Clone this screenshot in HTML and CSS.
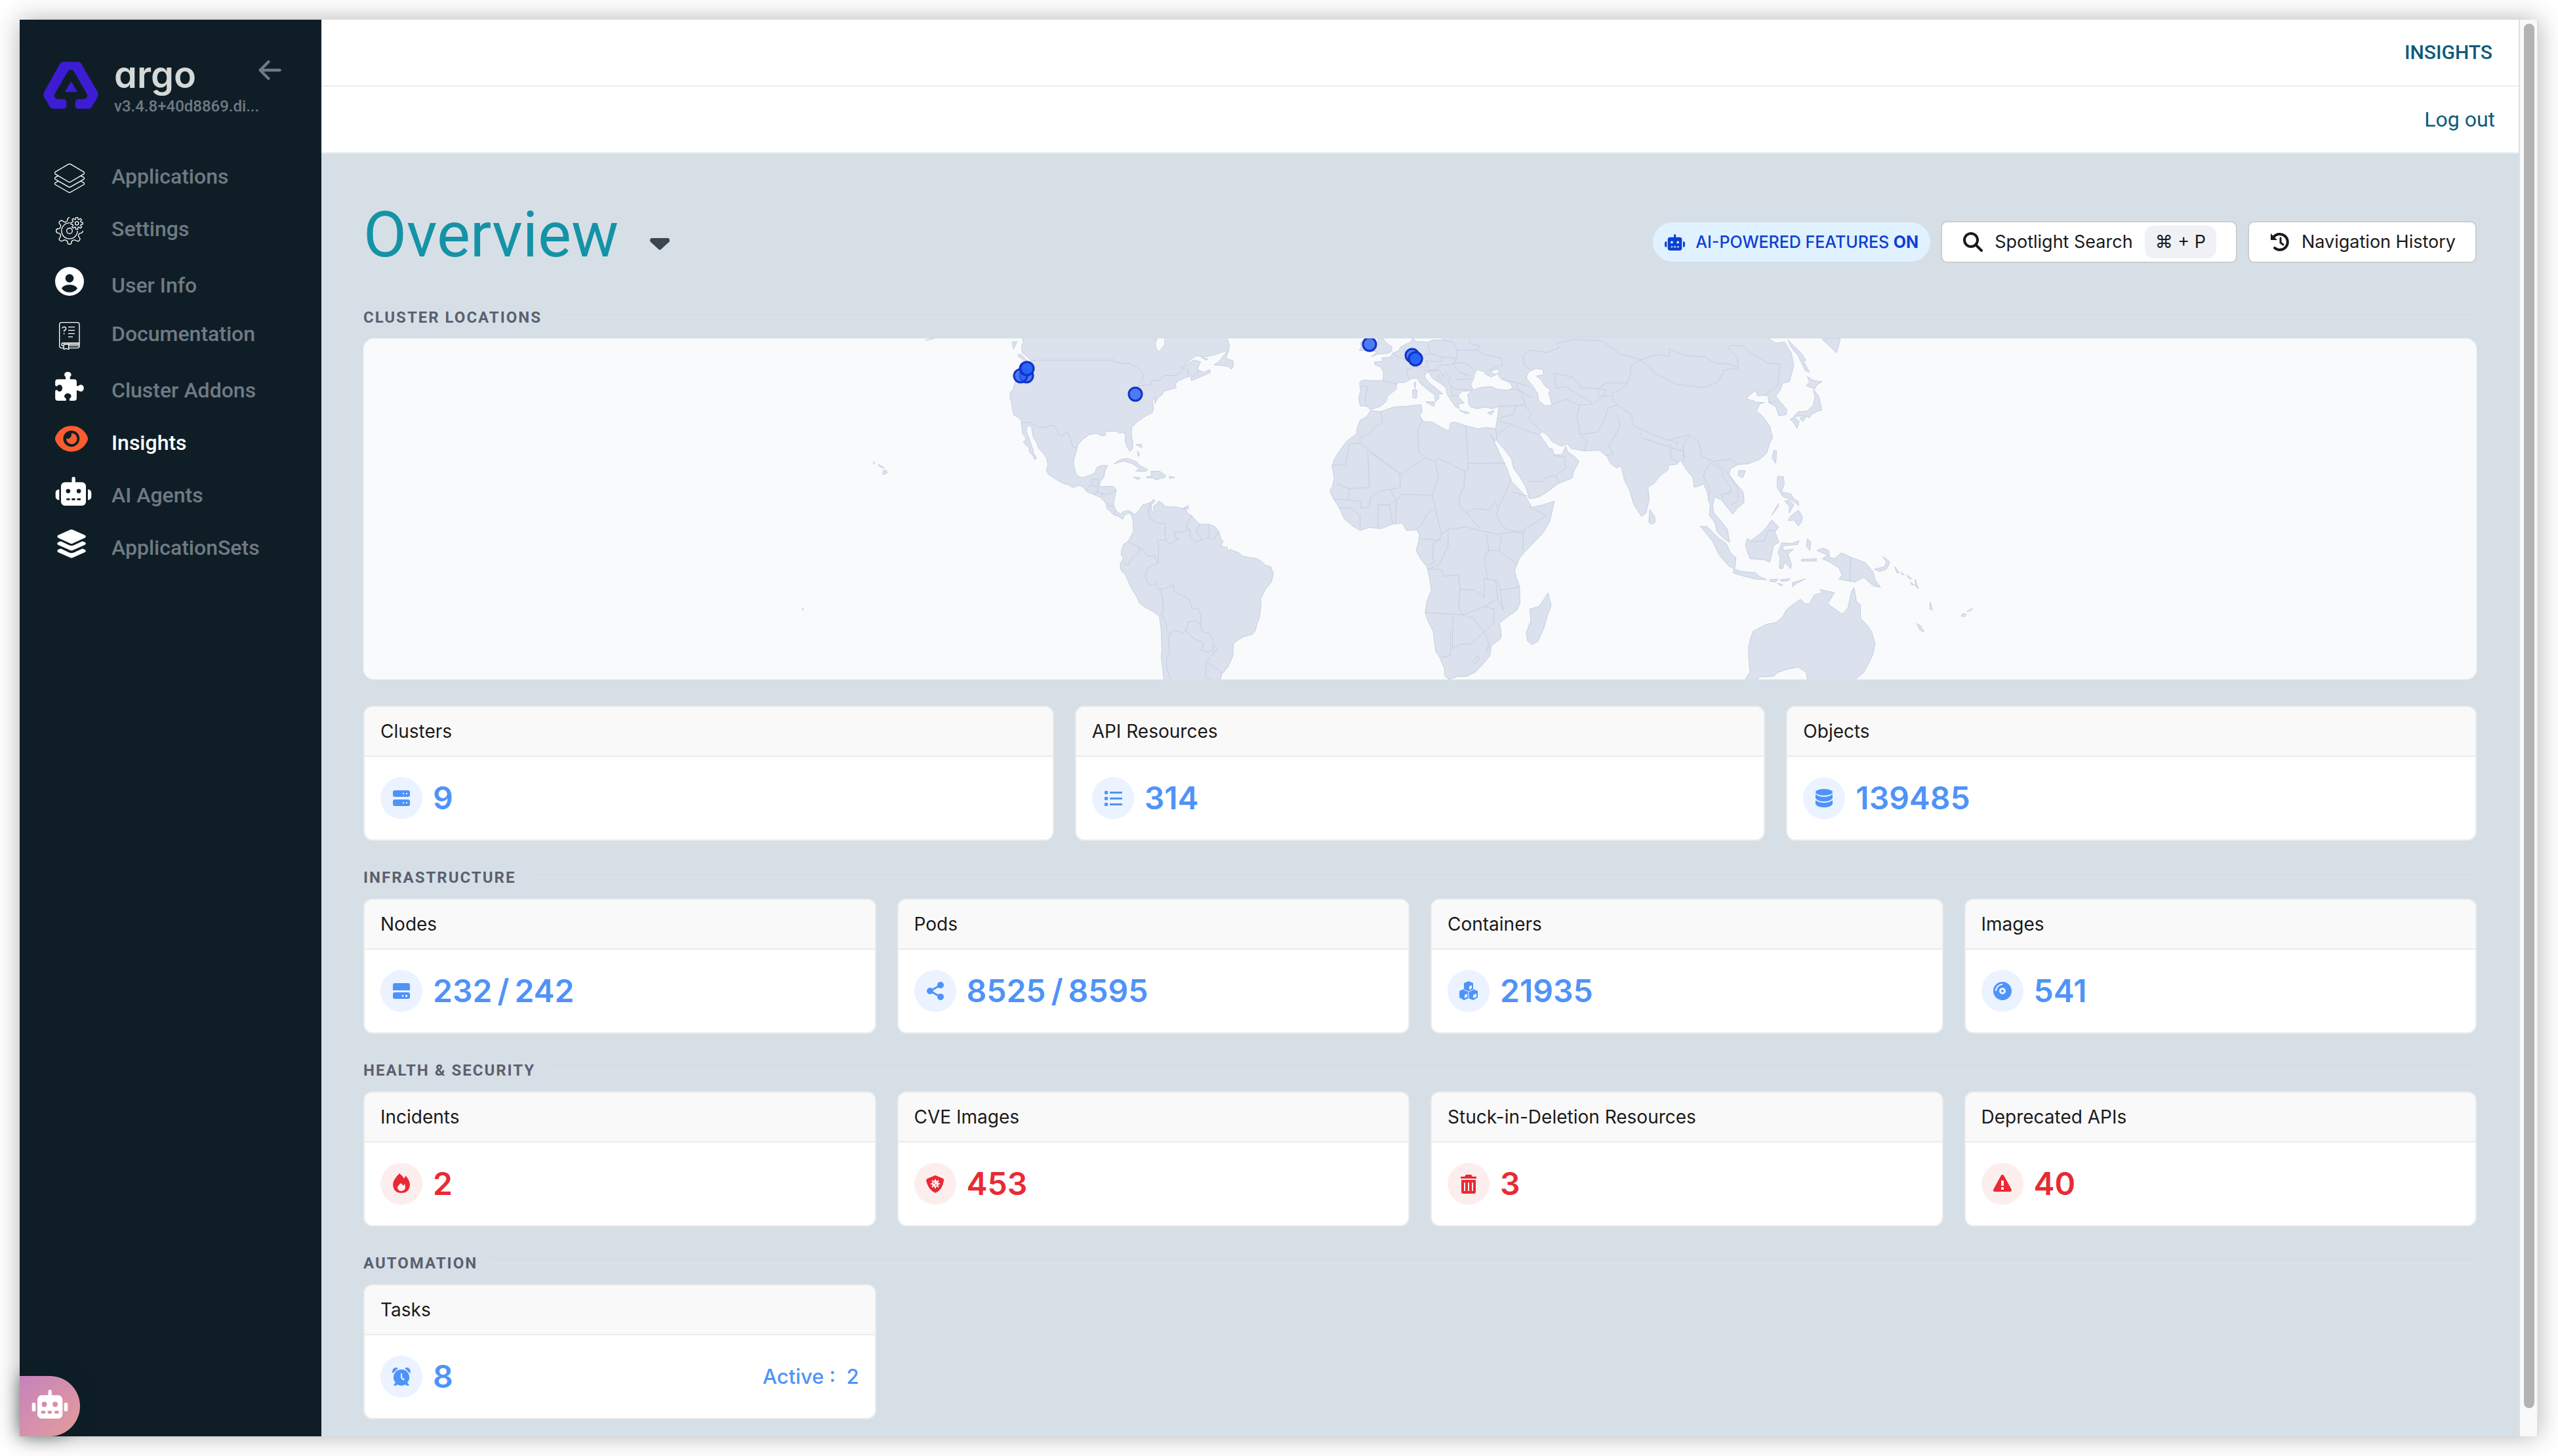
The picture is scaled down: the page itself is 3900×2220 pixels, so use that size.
FILE: index.html
```html
<!DOCTYPE html>
<html lang="en">
<head>
  <meta charset="UTF-8">
  <meta name="viewport" content="width=device-width, initial-scale=1.0">
  <title>Insights - Overview</title>
  <link rel="stylesheet" href="styles.css">
</head>
<body>
  <svg class="sprite" aria-hidden="true">
    <symbol id="robot" viewBox="252 832 165 133">
      <path fill-rule="evenodd" d="M295 857H374a18 18 0 0 1 18 18V947a18 18 0 0 1-18 18H295a18 18 0 0 1-18-18V875a18 18 0 0 1 18-18ZM300 898a10 10 0 1 0 20 0a10 10 0 1 0-20 0ZM349 898a10 10 0 1 0 20 0a10 10 0 1 0-20 0ZM306 931h8a4 4 0 0 1 0 9h-8a4 4 0 0 1 0-9ZM330 931h9a4 4 0 0 1 0 9h-9a4 4 0 0 1 0-9ZM355 931h9a4 4 0 0 1 0 9h-9a4 4 0 0 1 0-9Z"/>
      <path d="M327 860V840a8 8 0 0 1 16 0V860ZM269 890V939C258 939 252 932 252 923V906C252 897 258 890 269 890ZM401 890C411 890 417 897 417 906V923C417 932 411 939 401 939Z"/>
    </symbol>
    <symbol id="robot-round" viewBox="147 177 165 133">
      <path fill-rule="evenodd" d="M192 202H268a20 20 0 0 1 20 20V290a20 20 0 0 1-20 20H192a20 20 0 0 1-20-20V222a20 20 0 0 1 20-20ZM192 244a12 12 0 1 0 24 0a12 12 0 1 0-24 0ZM242 244a12 12 0 1 0 24 0a12 12 0 1 0-24 0ZM195 274h8a6 6 0 0 1 0 13h-8a6 6 0 0 1 0-13ZM225 274h8a6 6 0 0 1 0 13h-8a6 6 0 0 1 0-13ZM257 274h8a6 6 0 0 1 0 13h-8a6 6 0 0 1 0-13Z"/>
      <rect x="222" y="177" width="16" height="32" rx="8"/>
      <rect x="147" y="236" width="17" height="41" rx="8"/>
      <rect x="295" y="236" width="17" height="41" rx="8"/>
    </symbol>
  </svg>

  <div class="window">
    <nav class="sidebar">
      <div class="brand">
        <svg class="brand-logo" viewBox="0 0 252 215">
          <path fill="#3d1dd4" fill-rule="evenodd" d="M92 0H158Q168 0 173 8L248 138Q254 150 248 162L222 206Q217 215 206 215H161Q146 215 146 200V187Q146 171 161 171H183Q193 171 199 163Q204 155 199 146L141 46Q135 36 126 36Q117 36 111 46L53 146Q48 155 53 163Q59 171 69 171H91Q106 171 106 187V200Q106 215 91 215H46Q35 215 30 206L4 162Q-2 150 4 138L77 8Q82 0 92 0Z"/>
          <path fill="#3d1dd4" d="M124 95Q127 91 130 95L153 132Q156 138 150 138H104Q99 138 102 132Z"/>
        </svg>
        <div class="brand-text">
          <div class="brand-name">argo</div>
          <div class="brand-version">v3.4.8+40d8869.di...</div>
        </div>
        <button class="collapse" aria-label="Collapse sidebar">
          <svg viewBox="0 0 105 90" fill="none" stroke="currentColor" stroke-width="13" stroke-linecap="round" stroke-linejoin="round"><path d="M98 45H8M46 7L8 45L46 83"/></svg>
        </button>
      </div>
      <ul class="menu">
        <li><a class="menu-item" href="#">
          <svg width="46" height="46" viewBox="248 747 140 138" fill="none" stroke="#fff" stroke-width="4" stroke-linejoin="round">
            <path d="M313 750Q318 747 323 750L384 786Q390 791 384 796L323 832Q318 835 313 832L252 796Q246 791 252 786Z"/>
            <path d="M266 804L252 811Q247 816 252 820L313 855Q318 858 323 855L384 820Q389 816 384 811L370 804M266 829L252 836Q247 841 252 845L313 880Q318 884 323 880L384 845Q389 841 384 836L370 829"/>
          </svg>
          <span>Applications</span></a></li>
        <li><a class="menu-item" href="#">
          <svg width="42" height="42" viewBox="254 992 128 128" fill="none" stroke="#fff" stroke-width="4" stroke-linecap="round" stroke-linejoin="round">
            <path d="M317 994C311 995 309 998 309 1003C309 1009 306 1013 300 1015C295 1017 291 1014 288 1011C283 1007 276 1007 272 1012C268 1017 270 1022 274 1026C278 1030 278 1034 276 1039C274 1044 270 1046 265 1046C259 1046 256 1050 256 1056C256 1062 259 1065 265 1066C271 1066 274 1069 276 1074C278 1079 277 1082 274 1086C270 1090 268 1095 272 1100C276 1105 284 1104 288 1101C292 1098 296 1098 300 1099C306 1101 309 1104 309 1109C309 1115 312 1118 318 1118C324 1118 327 1115 327 1109C327 1104 330 1101 336 1099C340 1098 344 1098 348 1101C352 1104 359 1105 364 1100C368 1095 367 1090 363 1086C359 1082 358 1079 360 1074C362 1069 365 1066 371 1066C377 1065 380 1062 380 1057"/>
            <path d="M318 1019A37 37 0 1 0 355 1057"/>
            <circle cx="318" cy="1056" r="13"/>
            <circle cx="352" cy="1021" r="8"/>
            <path transform="translate(352 1021)" d="M27.700 -4.400V4.400L19.300 5.200L17.300 10L22.600 16.500L16.500 22.600L10 17.300L5.200 19.300L4.400 27.700H-4.400L-5.200 19.300L-10 17.300L-16.500 22.600L-22.600 16.500L-17.300 10L-19.300 5.200L-27.700 4.400V-4.400L-19.300 -5.200L-17.300 -10L-22.600 -16.500L-16.500 -22.600L-10 -17.300L-5.200 -19.300L-4.400 -27.700H4.400L5.200 -19.300L10 -17.300L16.500 -22.600L22.600 -16.500L17.300 -10L19.300 -5.200Z"/>
          </svg>
          <span>Settings</span></a></li>
        <li><a class="menu-item solid" href="#">
          <svg width="44" height="44" viewBox="0 0 132 132" fill="#fff">
            <path fill-rule="evenodd" d="M66 0A66 66 0 1 1 66 132A66 66 0 1 1 66 0ZM66 33A19 19 0 1 0 66 71A19 19 0 1 0 66 33ZM66 82C50 82 37 87 30 98C38 110 51 116 66 116C81 116 94 110 102 98C95 87 82 82 66 82Z"/>
          </svg>
          <span>User Info</span></a></li>
        <li><a class="menu-item" href="#">
          <svg width="32" height="44" viewBox="273 120 96 130" fill="none" stroke="#fff" stroke-width="4" stroke-linejoin="round">
            <path d="M294 241H285Q275 241 275 231V134Q275 124 285 124H356Q366 124 366 134V231Q366 241 356 241H317M366 218H291Q285 218 285 225Q285 231 291 231H294M317 231H366M294 224H366M295 221V247L306 243L317 247V221"/>
            <path d="M315 145H345M315 160H345M315 175H345M315 190H336M288 151Q289 144 297 144Q305 145 305 152Q305 158 296 161V166M296 172V178"/>
          </svg>
          <span>Documentation</span></a></li>
        <li><a class="menu-item solid" href="#">
          <svg width="44" height="44" viewBox="252 352 132 133">
            <g fill="#fff"><rect x="252" y="386" width="99" height="99" rx="12"/><ellipse cx="310" cy="365" rx="16" ry="13"/><path d="M300 372V390H320V372ZM345 417V438H365V417Z"/><ellipse cx="370" cy="427" rx="14" ry="16"/></g>
            <g fill="#0f1e26"><ellipse cx="272" cy="427" rx="13" ry="16"/><path d="M250 413Q258 422 266 417V437Q258 432 250 441ZM298 489Q305 481 301 474H319Q315 481 322 489Z"/><ellipse cx="310" cy="464" rx="16" ry="13"/></g>
          </svg>
          <span>Cluster Addons</span></a></li>
        <li><a class="menu-item solid active" href="#">
          <svg width="50" height="40" viewBox="252 599 149 119" fill="#fb5c30">
            <path fill-rule="evenodd" d="M326 600C286 600 262 628 253 651Q251 658 253 666C262 688 286 717 326 717C367 717 391 688 400 666Q402 658 400 651C391 628 367 600 326 600ZM326 621A37 37 0 1 1 326 695A37 37 0 1 1 326 621Z"/>
            <path d="M326 633A25 25 0 1 1 302 658C317 661 330 650 326 633Z"/>
          </svg>
          <span>Insights</span></a></li>
        <li><a class="menu-item solid" href="#">
          <svg width="56" height="44" fill="#fff"><use href="#robot"/></svg>
          <span>AI Agents</span></a></li>
        <li><a class="menu-item solid" href="#">
          <svg width="50" height="44" viewBox="260 1072 132 133" fill="#fff">
            <path d="M320 1074Q326 1071 332 1074L388 1099Q396 1105 388 1111L332 1137Q326 1140 320 1137L264 1111Q257 1105 264 1099Z"/>
            <path id="chevron" d="M264 1132L277 1127L315 1145Q326 1150 337 1145L376 1127L388 1132Q396 1138 388 1144L332 1169Q326 1172 320 1169L264 1144Q257 1138 264 1132Z"/>
            <use href="#chevron" y="34"/>
          </svg>
          <span>ApplicationSets</span></a></li>
      </ul>
      <button class="assistant" aria-label="AI assistant">
        <svg width="56" height="44" fill="#fff"><use href="#robot-round"/></svg>
      </button>
    </nav>

    <div class="page">
      <div class="topbar"><a class="crumb" href="#">INSIGHTS</a></div>
      <div class="topbar"><a href="#">Log out</a></div>

      <main class="content">
        <header class="page-head">
          <h1>Overview</h1>
          <button class="caret" aria-label="Switch view">
            <svg width="30" height="18" viewBox="0 0 30 18"><path fill="#3b4650" d="M3 0H27Q30 0 30 4Q30 5 29 6L17 17Q15 19 13 17L1 6Q0 5 0 4Q0 0 3 0Z"/></svg>
          </button>
          <div class="toolbar">
            <div class="ai-badge">
              <svg width="31" height="25" fill="#0b3fd4"><use href="#robot"/></svg>
              <span>AI-POWERED FEATURES <b>ON</b></span>
            </div>
            <button class="btn">
              <svg width="30" height="30" viewBox="0 0 30 30" fill="none" stroke="#1a1a1a" stroke-width="4" stroke-linecap="round"><circle cx="12" cy="12" r="10"/><path d="M19 19L28 28"/></svg>
              Spotlight Search
              <kbd>⌘ + P</kbd>
            </button>
            <button class="btn">
              <svg width="30" height="30" viewBox="0 0 30 30" fill="none" stroke="#1a1a1a" stroke-width="4" stroke-linecap="round"><path d="M5 8A12 12 0 1 1 7 24"/><path d="M16 9V16L20 19" stroke-width="3"/><path d="M1 2L1 12H11Z" fill="#1a1a1a" stroke="none"/></svg>
              Navigation History
            </button>
          </div>
        </header>

        <section class="group">
          <h2>Cluster Locations</h2>
          <svg class="map" viewBox="0 0 3222 520" role="img" aria-label="Cluster locations">
            <!-- Americas -->
            <g transform="translate(626 -16) scale(0.52296 0.35714)">
              <path class="land" d="M723 40L727 60L722 80L723 105L735 118L747 136L760 142L735 145L722 165L706 210L702 240L697 262L689 275L688 300L693 318L695 345L699 372L710 380L721 396L722 420L726 455L735 470L732 482L727 486L733 498L744 512L744 530L755 545L760 563L766 555L757 535L754 515L748 490L742 465L736 445L737 422L744 417L751 422L753 445L757 470L766 490L772 515L782 530L795 555L799 585L794 608L800 625L815 640L840 662L858 670L873 681L890 672L903 682L912 700L930 710L950 722L960 735L970 755L970 770L978 780L990 798L1005 805L1017 817L1022 800L1033 790L1042 800L1047 825L1048 870L1040 890L1032 912L1020 922L1013 950L1013 972L1020 978L1009 1010L1012 1035L1025 1055L1040 1105L1058 1150L1066 1175L1085 1195L1108 1213L1124 1232L1129 1290L1131 1380L1129 1405L1133 1450L1137 1510L1300 1510L1305 1480L1322 1450L1332 1420L1338 1400L1339 1350L1350 1335L1370 1318L1395 1308L1404 1290L1408 1265L1415 1240L1420 1180L1419 1155L1433 1115L1450 1085L1456 1050L1449 1020L1434 1015L1420 995L1404 983L1385 980L1365 974L1357 962L1330 945L1323 955L1322 937L1303 933L1309 912L1303 900L1297 870L1285 848L1268 838L1242 838L1230 822L1217 800L1208 795L1200 775L1175 765L1140 762L1132 748L1122 740L1115 752L1106 762L1108 785L1103 787L1100 770L1100 755L1111 738L1106 733L1098 745L1085 752L1075 755L1066 775L1052 797L1045 790L1035 780L1020 783L1010 795L1000 785L992 765L990 750L994 720L998 692L990 678L970 676L948 678L952 655L962 635L965 610L973 588L955 587L942 595L935 620L915 632L897 640L882 628L876 600L873 570L880 535L886 500L900 475L920 455L940 450L955 460L967 458L967 441L998 440L1007 450L1018 445L1025 460L1023 480L1030 510L1038 527L1046 515L1046 490L1042 460L1043 425L1060 400L1085 375L1103 362L1107 340L1103 315L1112 295L1110 325L1120 298L1132 285L1136 270L1150 265L1173 255L1170 240L1180 225L1200 212L1215 205L1235 192L1236 170L1244 145L1225 137L1205 152L1183 174L1205 145L1230 120L1262 122L1290 112L1325 95L1328 75L1322 50L1320 40L1140 40L1139 70L1123 103L1113 85L1112 65L1118 40Z"/>
              <path class="land" d="M1238 180L1252 190L1270 178L1273 190L1245 208L1217 225L1215 210L1235 198ZM1325 95L1312 115L1300 140L1283 158L1305 160L1325 165L1333 177L1340 160L1338 140L1318 130ZM1245 125L1265 132L1260 138ZM712 112L722 115L740 142L728 138L712 122ZM694 60L709 58L698 90ZM440 54L455 48L468 45ZM991 580L1010 562L1030 557L1055 570L1070 590L1090 605L1085 612L1055 612L1065 600L1045 580L1020 568ZM1086 635L1102 632L1098 612L1125 612L1142 630L1140 638L1113 648L1105 640L1086 640ZM1048 637L1068 640L1060 648ZM1153 633L1169 638L1153 643ZM1190 772L1208 758L1208 773ZM1056 498L1072 497L1072 512ZM1060 525L1066 540L1062 550ZM290 572L295 578L291 580ZM303 583L314 590L322 598L310 594ZM318 608L327 607L331 618L318 627ZM82 1196L86 1200L84 1205Z"/>
              <path class="border" d="M747 138H984L988 133L990 143L1015 152L1035 150L1060 170L1076 195L1074 225L1058 250L1100 240V225H1120L1140 203H1170L1188 188L1195 168L1207 180L1208 207M722 403H745L772 424H798L803 416H815L825 435L830 455L838 462L846 450H858L866 480L870 505L884 514M928 645H946L943 672L948 678M928 645L926 660L932 674L918 675L912 690M932 674L945 682L942 700L932 710M942 700L958 708L975 710L998 692M958 708L955 722M972 757L990 762M992 798L995 780M1052 797L1044 790M1098 748L1091 780L1095 812L1120 835H1142L1140 870L1143 905L1118 908L1122 940L1120 1005M1217 800L1202 840L1206 862L1190 872L1168 868L1170 895L1180 900L1155 922L1143 908M1210 855L1215 890L1227 915L1248 905M1242 838L1232 870L1248 905L1265 898L1282 902L1297 870M1268 840L1270 870L1265 898M1032 912L1065 935L1090 972L1112 975L1120 1005L1090 1022L1082 1060L1090 1090L1105 1100L1115 1090L1118 1112L1135 1115L1165 1095L1166 1125L1212 1158L1218 1198L1237 1200L1245 1230L1243 1265M1065 935L1066 955L1042 985L1033 1013L1018 1003M1125 1115L1133 1150L1134 1215L1124 1232M1131 1225L1143 1260L1145 1290L1155 1306L1165 1292L1183 1295L1187 1305L1202 1293L1208 1255L1230 1250L1243 1265L1247 1296L1268 1305L1281 1328L1280 1378L1265 1384L1247 1376L1252 1345L1220 1322L1202 1293M1281 1350L1292 1370L1260 1425L1303 1468L1303 1485M1260 1425L1258 1490L1275 1500M1155 1306L1150 1340L1154 1380L1145 1410L1146 1450L1156 1500"/>
            </g>
            <!-- Europe, Africa, Asia and Oceania -->
            <g transform="translate(1406 -16) scale(0.68878 0.35714)">
              <path class="land" d="M280 40L280 58L268 68L255 80L250 98L237 108L232 125L213 128L215 143L197 145L198 158L210 165L217 190L216 225L190 225L172 222L164 232L166 270L162 300L165 332L180 335L188 348L210 335L222 315L226 290L245 262L246 235L265 232L280 215L292 215L297 235L315 265L330 285L332 315L340 300L338 280L348 282L332 255L318 235L308 210L310 192L318 190L325 215L345 240L355 255L358 285L365 305L375 335L385 345L382 325L395 320L380 290L392 270L412 268L403 285L405 300L405 320L410 338L425 345L440 338L458 345L472 335L470 370L465 430L467 480L485 520L500 560L505 600L520 640L532 680L540 730L560 722L580 700L603 665L635 640L637 615L650 570L640 550L625 530L620 505L612 540L595 542L590 515L583 515L575 490L562 455L568 443L578 455L590 485L610 505L625 495L632 515L660 525L695 522L712 550L720 580L733 598L743 590L750 650L762 695L770 750L788 805L798 790L805 730L802 680L815 665L830 630L847 605L848 585L865 583L875 565L885 600L902 640L904 680L915 675L925 665L933 700L940 760L938 800L950 830L955 870L970 900L983 915L978 860L962 820L948 790L945 760L950 720L965 735L975 760L990 795L1000 770L1015 745L1013 700L995 660L982 625L985 600L1003 583L1025 580L1050 560L1065 535L1072 490L1078 470L1072 420L1055 375L1042 355L1050 325L1060 318L1042 318L1035 310L1022 305L1022 295L1040 268L1045 290L1060 288L1068 290L1070 320L1085 335L1092 375L1108 370L1110 350L1095 315L1085 290L1095 265L1100 235L1115 230L1125 160L1120 110L1105 60L1085 65L1065 40L352 40L345 52L325 52L315 62L300 58L290 60Z"/>
              <path class="land" d="M188 352L180 378L165 395L158 430L158 450L135 485L123 515L108 560L103 590L108 640L104 675L98 695L106 730L118 765L130 815L148 845L165 865L185 852L212 857L235 838L258 833L268 865L290 862L296 880L295 910L289 950L300 990L313 1020L319 1070L323 1120L313 1165L309 1215L315 1250L327 1295L332 1380L342 1410L352 1455L352 1485L362 1501L380 1488L400 1488L420 1470L437 1435L452 1400L456 1355L477 1325L477 1290L473 1260L490 1235L512 1205L519 1175L518 1105L510 1060L507 1035L517 985L530 955L550 915L570 875L585 825L595 740L570 755L545 766L537 740L530 715L500 655L490 600L475 540L463 490L452 450L463 485L468 470L465 430L445 425L425 430L400 418L375 402L365 405L362 440L345 425L325 402L305 400L297 375L302 355L300 327L265 335L240 337L210 358Z"/>
              <path class="land" d="M203 40L205 58L198 75L202 90L192 98L203 103L190 123L205 112L228 108L235 98L235 80L220 60L215 40ZM165 66L180 45L200 60L200 85L180 95L163 97L168 80ZM310 315L330 315L328 335ZM281 265L291 265L290 300L282 298ZM284 235L288 232L287 262ZM385 352L407 362L400 367ZM447 362L462 353L455 371ZM806 775L817 805L818 830L810 838L804 830ZM581 1131L588 1185L580 1225L572 1280L558 1340L545 1352L535 1335L533 1300L543 1250L541 1200L560 1190L570 1165ZM1081 522L1087 525L1085 578L1077 555ZM1003 608L1018 610L1012 640L1002 630ZM1112 52L1140 105L1152 138L1146 140L1160 190L1150 182L1135 120L1120 85ZM1186 45L1228 45L1225 70L1220 106L1200 70ZM1155 208L1170 225L1188 230L1176 242L1172 260L1153 248L1160 230ZM1168 262L1180 290L1187 350L1175 358L1162 372L1160 385L1152 375L1125 378L1135 358L1155 355L1168 330L1172 295ZM1117 390L1127 380L1137 400L1132 430L1125 405ZM1138 385L1152 378L1145 400ZM1089 633L1102 635L1104 665L1098 700L1118 708L1125 730L1135 740L1136 758L1120 735L1100 718L1088 680ZM1105 740L1115 735L1125 755L1115 790L1115 760ZM1135 778L1144 805L1142 830L1135 845L1125 820L1112 822L1120 800ZM1091 750L1090 765L1076 800ZM1076 820L1092 850L1083 870L1092 915L1080 930L1072 1000L1060 990L1028 985L1018 930L1022 900L1030 908L1050 880L1065 850ZM918 847L933 848L960 900L975 920L985 960L997 980L994 1030L980 1015L960 970L945 910ZM993 1030L1010 1040L1040 1045L1050 1062L1065 1075L1040 1072L1005 1055L990 1045ZM1137 908L1133 925L1102 930L1100 950L1124 945L1112 965L1120 1010L1118 1028L1105 1000L1100 1028L1093 1025L1095 980L1090 960L1098 918L1120 920ZM1155 900L1163 915L1160 950L1153 930ZM1142 988L1175 985L1175 995L1142 995ZM1072 1075L1090 1072L1085 1085L1072 1082ZM1095 1075L1117 1070L1112 1080L1097 1082ZM1150 1072L1132 1090L1122 1105L1122 1088ZM1088 1090L1100 1095L1098 1103ZM1176 950L1190 940L1202 950L1204 980L1215 985L1230 960L1250 978L1283 1002L1300 1040L1305 1075L1317 1108L1300 1100L1280 1065L1260 1085L1225 1072L1232 1055L1225 1025L1205 1000L1188 985L1200 970ZM1322 975L1338 1000L1330 1030L1315 1040L1303 1030L1325 1020L1330 1000ZM1348 1018L1358 1045L1353 1045ZM1362 1043L1370 1055L1364 1052ZM1375 1055L1386 1070L1380 1070ZM1384 1085L1392 1098L1385 1095ZM1393 1072L1401 1112L1395 1105ZM1427 1170L1432 1205L1426 1200ZM1397 1262L1405 1270L1414 1298L1404 1290ZM1498 1220L1507 1222L1503 1233L1496 1230ZM1508 1210L1522 1197L1515 1208Z"/>
              <path class="land" d="M1016 1510L1020 1490L1028 1470L1025 1400L1025 1360L1030 1320L1035 1295L1065 1265L1085 1258L1100 1235L1108 1205L1120 1185L1140 1158L1150 1178L1160 1178L1170 1140L1190 1130L1182 1117L1215 1130L1200 1178L1232 1222L1245 1195L1252 1130L1258 1108L1264 1170L1272 1180L1273 1240L1290 1275L1298 1300L1305 1350L1300 1395L1290 1435L1280 1470L1262 1501L1262 1510L1156 1510L1152 1470L1135 1448L1115 1455L1090 1470L1080 1487L1050 1490L1038 1510Z"/>
              <path class="sea" d="M418 195L425 178L435 185L445 188L440 195L455 210L470 195L475 215L498 235L503 258L490 266L468 262L455 250L430 255L415 265L410 240L417 215ZM453 185L470 175L473 192L462 198ZM540 185L555 173L570 178L571 200L555 205L565 220L575 250L587 265L582 275L590 330L575 333L560 310L558 280L548 250L535 220L533 205Z"/>
              <path class="border" d="M180 335L176 300L182 250L170 248M216 225L246 240M272 215L268 180L285 165L282 145L250 125L237 110M262 100L265 80M315 62L320 110L290 125M320 110L348 125L342 145L310 140M310 140L318 165L285 170M348 125L378 130L372 155L342 160L330 180L305 180M315 185L340 180L352 205L335 205L355 245M372 155L385 190L410 205M378 130L380 95L370 60L345 52M380 95L425 95L430 75L410 70L405 50M425 95L440 115L478 128L480 158L450 178M372 150L400 150L418 180M352 180L365 215L360 235L375 262L405 262M375 220L410 218M365 250L370 290L385 290M478 220L510 232L540 250M510 232L515 262L545 300M503 262L522 270L530 330L472 335M530 330L545 370L538 385L565 440M472 400L480 380L505 370L510 330M470 455L498 410L475 400M498 410L535 440L562 455M525 120L540 95L580 105L605 85L600 65L640 50L700 55L740 110L785 135L820 115L850 120L850 90L880 115L930 125L950 150L985 155L1002 172L970 180L958 230L925 255L865 240L820 195L785 135M525 120L530 165L545 180M785 135L765 165L762 205L757 235L710 235L690 260L655 255L635 210L595 195L598 260L620 250L670 310L680 325L650 330L620 305L590 325M757 235L745 260L722 280L725 310L735 330L765 370L772 420L800 445L845 480L895 455L915 485L920 545L945 570L985 560L1003 583M690 260L695 290L720 292M690 260L710 265L705 285L685 320M650 330L645 380L652 455L690 445L705 395L715 340L735 330M652 455L668 485L660 525M735 370L740 420L725 475L715 505L725 540L708 545M785 445L790 470L845 505L850 500M850 480L870 490L865 498M850 500L855 560L870 575M850 510L880 525L882 570M895 460L880 500L882 570M945 570L930 605L925 635L940 690L935 740M945 585L965 605L970 640L985 680L985 705L965 710L970 735M950 575L970 600L1000 680L1002 740L985 755M985 75L1010 75L1040 120L1068 150L1095 155L1090 240M985 75L980 90L1000 125L1002 172M1058 288L1085 255L1092 235M1070 318L1085 312M500 700L540 720M535 655L570 655L575 640L598 628L605 665M598 628L620 600L618 550L595 545M1030 912L1060 910L1068 865L1085 865M1251 978L1249 1085"/>
              <path class="border" d="M210 358L215 405L195 425L190 450L165 465V493L140 495V515L132 585H103M165 493L255 625L310 555L330 570L337 555L398 613M297 380L303 400L292 430L295 530L310 555M399 420L404 578L488 577M404 578V608L397 613L395 678L385 720L385 760L400 790M182 527L186 682L142 685L130 680L115 665M186 530L253 620L254 682L210 695L188 725L185 765L165 770M142 685L138 735L106 730M138 735L165 740L168 768M118 768L145 770L165 800L165 860M205 755H230L245 735L232 692M205 755L205 855M230 755L237 835M245 740L243 832M245 740L258 710L325 715L332 770L310 800L305 830L288 862M332 575L338 640L325 715M332 770L335 800L345 880L360 860L400 850L430 865L470 880L525 865L578 800L540 765M400 790L420 770L450 778L463 740L470 770L468 800L480 850L520 878L527 870L525 950M400 790L430 855M500 640L488 700L470 770M345 880L340 905L300 900M345 905L328 915L325 980L330 1000L315 1015M360 860L360 930L340 1010L315 1030H345L350 1060L382 1055L386 1115L420 1120L440 1150L440 1070L447 1070L440 980L450 950L445 880M470 880L478 900L472 950L512 1008M450 950H472M440 1070L470 1080L475 1120L518 1105M386 1115L383 1190L392 1225L309 1215M392 1225L440 1190L470 1155L465 1080M475 1120L482 1205L470 1160M440 1190L462 1200L460 1260L440 1298L410 1350L385 1350L370 1370V1230M365 1290V1400L345 1405M392 1225L415 1240L440 1298L450 1345L445 1380L452 1355M415 1425L425 1402L430 1415L418 1435Z"/>
            </g>
            <g class="pins">
              <circle cx="1011" cy="57" r="10"/>
              <circle cx="1002" cy="57" r="10"/>
              <circle cx="1011" cy="46" r="10"/>
              <circle cx="1012" cy="46" r="10"/>
              <circle cx="1177" cy="85" r="10"/>
              <circle cx="1534" cy="9" r="10"/>
              <circle cx="1599" cy="26" r="10"/>
              <circle cx="1604" cy="31" r="10"/>
              <circle cx="1604" cy="31" r="10"/>
            </g>
          </svg>
          <div class="cards thirds">
            <article class="card">
              <h3>Clusters</h3>
              <div class="card-body">
                <span class="icon"><svg viewBox="0 0 28 28"><path fill-rule="evenodd" d="M4 2H24Q27 2 27 5V9Q27 12 24 12H4Q1 12 1 9V5Q1 2 4 2ZM16 6V8H18V6ZM21 6V8H23V6ZM4 16H24Q27 16 27 19V23Q27 26 24 26H4Q1 26 1 23V19Q1 16 4 16ZM16 20V22H18V20ZM21 20V22H23V20Z"/></svg></span>
                <strong>9</strong>
              </div>
            </article>
            <article class="card">
              <h3>API Resources</h3>
              <div class="card-body">
                <span class="icon"><svg viewBox="0 0 28 28"><rect x="1" y="3" width="5" height="5" rx="1"/><rect x="1" y="12" width="5" height="5" rx="1"/><rect x="1" y="21" width="5" height="5" rx="1"/><rect x="9" y="4" width="19" height="3" rx="1"/><rect x="9" y="13" width="19" height="3" rx="1"/><rect x="9" y="22" width="19" height="3" rx="1"/></svg></span>
                <strong>314</strong>
              </div>
            </article>
            <article class="card">
              <h3>Objects</h3>
              <div class="card-body">
                <span class="icon"><svg viewBox="0 0 28 28"><ellipse cx="14" cy="5" rx="13" ry="5"/><path d="M1 8Q6 12 14 12Q22 12 27 8V14Q24 19 14 19Q4 19 1 14ZM1 17Q6 21 14 21Q22 21 27 17V23Q24 28 14 28Q4 28 1 23Z"/></svg></span>
                <strong>139485</strong>
              </div>
            </article>
          </div>
        </section>

        <section class="group">
          <h2>Infrastructure</h2>
          <div class="cards">
            <article class="card">
              <h3>Nodes</h3>
              <div class="card-body">
                <span class="icon"><svg viewBox="0 0 28 28"><path fill-rule="evenodd" d="M4 2H24Q27 2 27 5V13H1V5Q1 2 4 2ZM4 16H24Q27 16 27 19V23Q27 26 24 26H4Q1 26 1 23V19Q1 16 4 16ZM15 20V23H17V20ZM20 20V23H23V20Z"/></svg></span>
                <strong>232&thinsp;/&thinsp;242</strong>
              </div>
            </article>
            <article class="card">
              <h3>Pods</h3>
              <div class="card-body">
                <span class="icon"><svg viewBox="0 0 28 28"><circle cx="6" cy="14" r="5"/><circle cx="22" cy="5" r="5"/><circle cx="22" cy="23" r="5"/><path d="M22 5L6 14L22 23" fill="none" stroke="currentColor" stroke-width="3"/></svg></span>
                <strong>8525&thinsp;/&thinsp;8595</strong>
              </div>
            </article>
            <article class="card">
              <h3>Containers</h3>
              <div class="card-body">
                <span class="icon"><svg viewBox="0 0 28 28"><path fill-rule="evenodd" d="M14 -1L21 2V11L28 14V24L21 28L14 25L7 28L0 24V14L7 11V2ZM15 7V12L19 10V5ZM8 20V25L12 23V18ZM21 20V25L26 23V18Z"/><path d="M7 12L14 15L21 12M14 15V25" fill="none" stroke="#eaf3ff" stroke-width="1"/></svg></span>
                <strong>21935</strong>
              </div>
            </article>
            <article class="card">
              <h3>Images</h3>
              <div class="card-body">
                <span class="icon"><svg viewBox="0 0 28 28"><path fill-rule="evenodd" d="M14 0A14 14 0 1 1 14 28A14 14 0 1 1 14 0ZM14 9A5 5 0 1 0 14 19A5 5 0 1 0 14 9Z"/><circle cx="14" cy="14" r="2"/><path d="M4 14A10 10 0 0 1 14 4" fill="none" stroke="#eaf3ff" stroke-width="2"/></svg></span>
                <strong>541</strong>
              </div>
            </article>
          </div>
        </section>

        <section class="group">
          <h2>Health &amp; Security</h2>
          <div class="cards">
            <article class="card danger">
              <h3>Incidents</h3>
              <div class="card-body">
                <span class="icon"><svg viewBox="0 0 28 28"><path fill-rule="evenodd" d="M11 -2Q16 2 18 6Q19 3 21 2Q27 10 27 15Q26 28 14 28Q2 28 1 15Q1 8 11 -2ZM13 13Q8 17 8 20Q9 25 14 25Q20 24 20 19Q20 16 19 14L17 17Q15 14 13 13Z"/></svg></span>
                <strong>2</strong>
              </div>
            </article>
            <article class="card danger">
              <h3>CVE Images</h3>
              <div class="card-body">
                <span class="icon"><svg viewBox="0 0 28 28"><path d="M14 1L26 6Q27 7 27 9Q25 23 14 28Q3 23 0 9Q0 7 2 6Z"/><circle cx="14" cy="14" r="5" fill="#fdeeee"/><path d="M14 7V21M7 14H21M9 9L19 19M19 9L9 19" stroke="#fdeeee" stroke-width="2"/><circle cx="12" cy="13" r="1"/><circle cx="15" cy="16" r="1"/></svg></span>
                <strong>453</strong>
              </div>
            </article>
            <article class="card danger">
              <h3>Stuck-in-Deletion Resources</h3>
              <div class="card-body">
                <span class="icon"><svg viewBox="0 0 28 28"><path d="M10 0H18L20 3H26V6H2V3H8Z"/><path fill-rule="evenodd" d="M3 8H25V26Q25 29 22 29H6Q3 29 3 26ZM7 12V25H9V12ZM13 12V25H15V12ZM19 12V25H21V12Z"/></svg></span>
                <strong>3</strong>
              </div>
            </article>
            <article class="card danger">
              <h3>Deprecated APIs</h3>
              <div class="card-body">
                <span class="icon"><svg viewBox="0 0 28 28"><path fill-rule="evenodd" d="M12 1Q14 -1 16 1L28 23Q28 26 26 26H2Q0 26 0 23ZM12 9V17H16V9ZM12 19V23H16V19Z"/></svg></span>
                <strong>40</strong>
              </div>
            </article>
          </div>
        </section>

        <section class="group">
          <h2>Automation</h2>
          <div class="cards">
            <article class="card">
              <h3>Tasks</h3>
              <div class="card-body">
                <span class="icon"><svg viewBox="0 0 28 28"><path fill-rule="evenodd" d="M14 3A12 12 0 0 1 23 23L26 27L23 28L20 26A12 12 0 0 1 8 26L5 28L2 27L5 23A12 12 0 0 1 14 3ZM13 9V16L17 20L19 18L15 15V9ZM0 7Q0 1 6 0L9 1L1 9ZM28 7Q28 1 22 0L19 1L27 9Z"/></svg></span>
                <strong>8</strong>
                <span class="extra">Active :&nbsp; 2</span>
              </div>
            </article>
          </div>
        </section>
      </main>
    </div>

    <div class="scrollbar"><div class="scrollbar-thumb"></div></div>
  </div>
</body>
</html>
```

FILE: styles.css
```css
* {
  box-sizing: border-box;
}

body {
  display: flex;
  min-height: 100vh;
  margin: 0;
  padding: 30px;
  background: #fff;
  font: 28px/36px Inter, "Liberation Sans", sans-serif;
  color: #1a1a1a;
}

h1,
h2,
h3,
ul {
  margin: 0;
  padding: 0;
}

a {
  color: inherit;
  text-decoration: none;
}

button {
  border: 0;
  font: inherit;
  color: inherit;
  background: none;
}

.sprite {
  position: absolute;
  width: 0;
  height: 0;
}

.window {
  display: flex;
  flex: 1;
  min-width: 0;
  box-shadow: 0 0 36px rgba(0, 0, 0, .3);
}

/* sidebar */

.sidebar {
  position: relative;
  flex: 0 0 460px;
  padding-top: 56px;
  background: #0f1e26;
  color: #707a84;
  font-family: Roboto, sans-serif;
}

.brand {
  display: flex;
  align-items: flex-start;
  height: 146px;
  padding-left: 36px;
}

.brand-logo {
  width: 84px;
  height: 72px;
  margin-top: 8px;
}

.brand-text {
  width: 220px;
  margin-left: 24px;
}

.brand-name {
  padding-bottom: 4px;
  font: 600 56px/56px Inter, sans-serif;
  font-feature-settings: "cv11";
  color: #d5d9d7;
}

.brand-version {
  font-size: 24px;
  font-weight: 500;
  line-height: 32px;
  white-space: nowrap;
}

.collapse {
  width: 35px;
  margin-top: 6px;
  padding: 0;
}

.collapse svg {
  display: block;
  width: 35px;
  height: 30px;
}

.menu {
  list-style: none;
}

.menu-item {
  display: grid;
  grid-template-columns: 64px 1fr;
  align-items: center;
  height: 80px;
  padding-left: 52px;
  column-gap: 24px;
  font-size: 32px;
  font-weight: 500;
}

.menu-item svg {
  justify-self: center;
  margin-left: -16px;
}

.menu-item span {
  padding-bottom: 6px;
}

.menu-item.solid svg {
  justify-self: start;
  margin: 0 0 6px 2px;
}

.menu-item.solid span {
  padding: 6px 0 0;
}

.menu-item.active {
  color: #fff;
}

.assistant {
  position: absolute;
  left: 0;
  bottom: 0;
  display: flex;
  align-items: center;
  width: 92px;
  height: 92px;
  padding: 0 0 6px 18px;
  border-radius: 0 46px 46px 0;
  background: linear-gradient(135deg, #c583bd, #e59c9a);
  box-shadow: 0 0 24px rgba(0, 30, 36, .5);
}

/* page */

.page {
  display: flex;
  flex: 1;
  flex-direction: column;
  min-width: 0;
}

.topbar {
  display: flex;
  align-items: center;
  justify-content: flex-end;
  height: 102px;
  padding-right: 36px;
  border-bottom: 2px solid #e8eef1;
  background: #fff;
  color: #0d5b78;
  font: 32px/36px Roboto, sans-serif;
}

.crumb {
  padding-right: 4px;
  font-size: 30px;
  font-weight: 500;
}

.content {
  flex: 1;
  padding: 68px 64px 20px;
  background: #d7dfe6;
}

.page-head {
  display: flex;
  align-items: center;
  margin-bottom: 54px;
}

.page-head h1 {
  font: 400 96px/112px Roboto, sans-serif;
  color: #1593a6;
}

.caret {
  margin: 28px 0 0 48px;
  padding: 0;
  line-height: 0;
}

.toolbar {
  display: flex;
  align-items: center;
  gap: 16px;
  margin: 22px 0 0 auto;
}

.ai-badge {
  display: flex;
  align-items: center;
  gap: 16px;
  height: 60px;
  padding: 0 18px;
  border-radius: 30px;
  background: #e0f1ff;
  color: #0b3fd4;
  font-size: 25px;
  font-weight: 500;
}

.ai-badge b {
  font-weight: 700;
}

.btn {
  display: flex;
  align-items: center;
  gap: 18px;
  height: 64px;
  padding: 0 30px 0 32px;
  border: 2px solid #ccc;
  border-radius: 10px;
  background: #fff;
  font-size: 27px;
}

kbd {
  padding: 7px 16px;
  border-radius: 14px;
  background: #f0f1f5;
  font: inherit;
}

/* groups and cards */

.group {
  margin-bottom: 40px;
}

.group:last-child {
  margin-bottom: 0;
}

.group h2 {
  display: flex;
  align-items: center;
  gap: 20px;
  margin-bottom: 16px;
  color: #5a6070;
  font: 700 24px/32px Roboto, sans-serif;
  letter-spacing: 2px;
  text-transform: uppercase;
}

.group h2::after {
  content: "";
  flex: 1;
  height: 2px;
  background: #dee0e6;
}

.map {
  display: block;
  width: 100%;
  height: auto;
  margin-bottom: 40px;
  border-radius: 16px;
  background: #f8fafc;
}

.land,
.border,
.sea {
  fill: #dbe1ed;
  stroke: #c5cfe0;
  stroke-width: 1px;
  vector-effect: non-scaling-stroke;
  stroke-linejoin: round;
}

.border {
  fill: none;
}

.sea {
  fill: #f8fafc;
}

.pins circle {
  fill: rgba(37, 99, 245, .8);
  stroke: #1432cc;
  stroke-width: 3px;
}

.cards {
  display: grid;
  grid-template-columns: repeat(4, 1fr);
  gap: 32px;
}

.cards.thirds {
  grid-template-columns: repeat(3, 1fr);
}

.card {
  overflow: hidden;
  border: 2px solid #ebebeb;
  border-radius: 14px;
  background: #fff;
  color: #4f93f8;
}

.card.danger {
  color: #e82a34;
}

.card h3 {
  padding: 19px 24px;
  border-bottom: 2px solid #ebebeb;
  background: #f9f9f9;
  color: #1a1a1a;
  font-size: 28px;
  font-weight: 400;
}

.card-body {
  display: flex;
  align-items: center;
  gap: 16px;
  height: 126px;
  padding: 0 24px;
}

.card-body strong {
  font-size: 48px;
  font-weight: 600;
  line-height: 60px;
}

.icon {
  display: flex;
  align-items: center;
  justify-content: center;
  width: 64px;
  height: 64px;
  border-radius: 50%;
  background: #eaf3ff;
}

.danger .icon {
  background: #fdeeee;
}

.icon svg {
  width: 28px;
  height: 28px;
  overflow: visible;
  fill: currentColor;
}

.extra {
  margin-left: auto;
  font-size: 31px;
  font-weight: 500;
}

/* scrollbar */

.scrollbar {
  flex: 0 0 30px;
  padding: 6px 4px 6px 6px;
  border: solid #dfdfdf;
  border-width: 0 2px;
  background: #f9f9f9;
}

.scrollbar-thumb {
  width: 16px;
  height: calc(100% - 37px);
  border-radius: 8px;
  background: #b3b3b3;
}
```
